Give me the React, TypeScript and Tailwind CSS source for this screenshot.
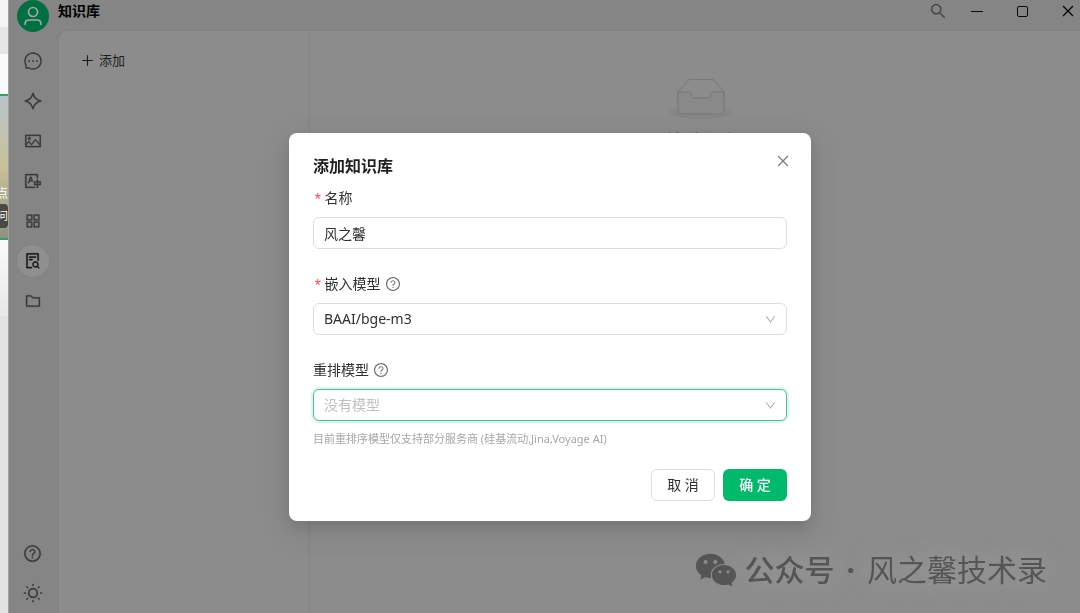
import {
  AiFillWechat,
  AiOutlineAppstore,
  AiOutlineClose,
  AiOutlineDown,
  AiOutlineFileSearch,
  AiOutlineFolder,
  AiOutlineMessage,
  AiOutlinePicture,
  AiOutlinePlus,
  AiOutlineQuestionCircle,
  AiOutlineSearch,
  AiOutlineTranslation,
} from 'react-icons/ai';

function SparkleIcon() {
  return (
    <svg viewBox="0 0 18 18" className="size-[18px]" fill="none" stroke="currentColor" strokeWidth="1.5" strokeLinejoin="round">
      <path d="M9 1.2C10 5.2 12.2 8 16.8 9C12.2 10 10 12.8 9 16.8C8 12.8 5.8 10 1.2 9C5.8 8 8 5.2 9 1.2Z" />
    </svg>
  );
}

function SunIcon() {
  return (
    <svg viewBox="0 0 20 20" className="size-5" fill="none" stroke="currentColor" strokeWidth="1.7" strokeLinecap="round">
      <circle cx="10" cy="10" r="4.3" />
      <path d="M10 1.5V2.2M10 17.8V18.5M1.5 10H2.2M17.8 10H18.5M4 4L4.5 4.5M15.5 15.5L16 16M4 16L4.5 15.5M15.5 4.5L16 4" />
    </svg>
  );
}

function EmptyBox() {
  return (
    <svg viewBox="0 0 64 41" className="h-[41px] w-16" fill="none">
      <ellipse cx="32" cy="33" rx="32" ry="7" fill="#868686" />
      <g stroke="#777777" fill="#8c8c8c">
        <path d="M55 12.8L44.9 1.3C44.4 0.8 43.7 0.5 42.9 0.5H21.1C20.3 0.5 19.6 0.8 19.1 1.3L9 12.8V22H55V12.8Z" />
        <path
          d="M41.6 15.9C41.6 14.3 42.6 13 43.8 13H55V31.1C55 33.3 53.7 35 52 35H12C10.3 35 9 33.3 9 31.1V13H20.2C21.4 13 22.4 14.3 22.4 15.9C22.4 17.5 23.4 18.8 24.6 18.8H39.4C40.6 18.8 41.6 17.5 41.6 15.9Z"
          fill="#898989"
        />
      </g>
    </svg>
  );
}

const navItems = [
  { label: '助手', icon: <AiOutlineMessage size={20} /> },
  { label: '智能体', icon: <SparkleIcon /> },
  { label: '绘画', icon: <AiOutlinePicture size={18} strokeWidth={16} /> },
  { label: '翻译', icon: <AiOutlineTranslation size={18} strokeWidth={16} /> },
  { label: '小程序', icon: <AiOutlineAppstore size={18} strokeWidth={16} /> },
  { label: '知识库', icon: <AiOutlineFileSearch size={18} strokeWidth={16} />, active: true },
  { label: '文件', icon: <AiOutlineFolder size={18} strokeWidth={16} /> },
];

// Sliver of the window that sits behind the app
function BackgroundWindow() {
  return (
    <div className="flex w-[9px] shrink-0 flex-col overflow-hidden border-r border-[#a0a0a0] bg-[#e2e2e2] text-xs text-white">
      <div className="h-[27px] bg-[#f5f5f5]" />
      <div className="h-[27px] bg-[#e6e6e6]" />
      <div className="h-10 bg-[#fafafa]" />
      <div className="flex h-[146px] flex-col items-end border-y-2 border-[#2aa566] bg-linear-to-b from-[#b9c3cb] via-[#c9c199] to-[#8f9182] pt-[88px]">
        <span className="leading-5">点</span>
        <span className="flex h-6 items-center rounded-r bg-[#4a4a42] text-[11px]">问</span>
      </div>
      <div className="h-[76px] bg-linear-to-b from-[#fafafa] to-[#e8e8e8]" />
    </div>
  );
}

function Sidebar() {
  return (
    <nav className="flex w-[49px] shrink-0 flex-col items-center pr-0.5 pb-1 text-[#3a3a3a]">
      <button aria-label="用户" className="mb-[13px] flex h-8 w-8 shrink-0 items-center justify-center rounded-full bg-[#006f42] text-[#a5a5a5]">
        <svg viewBox="0 0 20 20" className="size-5" fill="none" stroke="currentColor" strokeWidth="1.7" strokeLinecap="round">
          <circle cx="10" cy="6" r="4.5" />
          <path d="M2.2 18.3V17.6C2.2 15.4 3.8 14 5.8 14H14.2C16.2 14 17.8 15.4 17.8 17.6V18.3" />
        </svg>
      </button>
      <div className="flex flex-col gap-2">
        {navItems.map((item) => (
          <button
            key={item.label}
            aria-label={item.label}
            className={
              item.active
                ? 'flex size-8 items-center justify-center rounded-full bg-[#8f8f8f] text-[#101010] ring-1 ring-[#828282]'
                : 'flex size-8 items-center justify-center'
            }
          >
            {item.icon}
          </button>
        ))}
      </div>
      <div className="mt-auto flex flex-col gap-2">
        <button aria-label="帮助" className="flex size-8 items-center justify-center">
          <AiOutlineQuestionCircle size={19} strokeWidth={16} />
        </button>
        <button aria-label="主题" className="flex size-8 items-center justify-center">
          <SunIcon />
        </button>
      </div>
    </nav>
  );
}

function TitleBar() {
  return (
    <header className="flex h-[30px] shrink-0 items-center pb-2 text-[#0a0a0a]">
      <h1 className="text-sm font-bold text-black">知识库</h1>
      <div className="ml-auto flex items-center">
        <button aria-label="搜索" className="mr-6 text-[#4b4b4b]">
          <AiOutlineSearch size={18} strokeWidth={16} />
        </button>
        <button aria-label="最小化" className="mr-[34px] flex h-5 w-3 items-center">
          <span className="h-px w-full bg-current" />
        </button>
        <button aria-label="最大化" className="mr-[34px] size-[11px] rounded-xs border border-current" />
        <button aria-label="关闭" className="mr-1.5">
          <svg viewBox="0 0 12 12" className="size-3" stroke="currentColor" strokeWidth="1.4">
            <path d="M1 1L11 11M11 1L1 11" />
          </svg>
        </button>
      </div>
    </header>
  );
}

const fieldClass = 'h-8 w-full appearance-none rounded-md border bg-white px-2.5 text-sm outline-none';
const labelClass = 'mb-2 flex h-[22px] items-center text-sm text-[#303030]';

function RequiredMark() {
  return <span className="mr-0.5 pt-1.5 font-['Liberation_Mono',monospace] text-base leading-4 text-[#ff4d4f]">*</span>;
}

function SelectArrow() {
  return <AiOutlineDown size={13} className="pointer-events-none absolute top-2.5 right-2.5 text-[#b0b0b0]" />;
}

function AddKnowledgeDialog() {
  return (
    <div className="fixed inset-0 flex items-start justify-center pt-[133px] pl-5">
      <form
        role="dialog"
        aria-labelledby="dialog-title"
        className="relative w-full max-w-[522px] rounded-lg bg-white px-6 py-5 shadow-[0_6px_16px_rgba(0,0,0,0.12),0_9px_28px_8px_rgba(0,0,0,0.06)]"
      >
        <button type="button" aria-label="关闭" className="absolute top-5 right-5 text-[#808080]">
          <AiOutlineClose size={16} />
        </button>
        <h2 id="dialog-title" className="mb-2 text-base leading-[26px] font-bold text-[#1f1f1f]">
          添加知识库
        </h2>

        <div className="flex flex-col gap-6">
          <div>
            <label htmlFor="name" className={labelClass}>
              <RequiredMark />
              名称
            </label>
            <input id="name" defaultValue="风之馨" className={`${fieldClass} border-[#dedede] text-[#303030]`} />
          </div>

          <div>
            <label htmlFor="embed" className={labelClass}>
              <RequiredMark />
              嵌入模型
              <AiOutlineQuestionCircle size={16} className="ml-1 text-[#707070]" />
            </label>
            <div className="relative">
              <select id="embed" className={`${fieldClass} border-[#dedede] text-[#303030]`}>
                <option>BAAI/bge-m3</option>
              </select>
              <SelectArrow />
            </div>
          </div>

          <div>
            <label htmlFor="rerank" className={labelClass}>
              重排模型
              <AiOutlineQuestionCircle size={16} className="ml-1 text-[#707070]" />
            </label>
            <div className="relative">
              <select
                id="rerank"
                className={`${fieldClass} border-[#3dcb8b] text-[#bfbfbf] shadow-[0_0_0_2px_rgba(0,185,107,0.12)]`}
              >
                <option>没有模型</option>
              </select>
              <SelectArrow />
            </div>
            <p className="mt-2 text-[11px] leading-5 text-[#a6a6a6]">
              目前重排序模型仅支持部分服务商 (硅基流动,Jina,Voyage AI)
            </p>
          </div>
        </div>

        <div className="mt-5 flex justify-end gap-2 text-sm">
          <button type="button" className="h-8 w-16 rounded-md border border-[#dedede] text-[#303030]">
            取 消
          </button>
          <button type="submit" className="h-8 w-16 rounded-md bg-[#00b96b] font-medium text-white">
            确 定
          </button>
        </div>
      </form>
    </div>
  );
}

export default function App() {
  return (
    <div className="flex h-screen overflow-hidden bg-[#858585] font-['Noto_Sans','Noto_Sans_CJK_SC',sans-serif]">
      <BackgroundWindow />
      <Sidebar />
      <div className="flex min-w-0 flex-1 flex-col">
        <TitleBar />
        <div className="flex min-h-0 flex-1 rounded-tl-[10px] border-t border-l border-[#828282] bg-[#8c8c8c]">
          <aside className="w-[251px] shrink-0 border-r border-[#848484] px-[21px] py-[19px]">
            <button className="flex items-center gap-1 text-[13px] leading-5 text-[#1c1c1c]">
              <AiOutlinePlus size={15} />
              添加
            </button>
          </aside>
          <main className="flex flex-1 flex-col items-center pt-12 pl-3">
            <EmptyBox />
            <p className="mt-[9px] text-sm text-[#484848]">暂无知识库</p>
          </main>
        </div>
      </div>

      <AddKnowledgeDialog />

      <div className="pointer-events-none fixed right-[33px] bottom-5 flex items-center text-[30px] leading-[46px] text-[#555555] [text-shadow:0_0_24px_#a0a0a0]">
        <AiFillWechat size={46} className="mr-1.5" />
        <span className="font-medium">公众号</span>
        <span className="mx-3 font-bold">·</span>
        <span>风之馨技术录</span>
      </div>
    </div>
  );
}
